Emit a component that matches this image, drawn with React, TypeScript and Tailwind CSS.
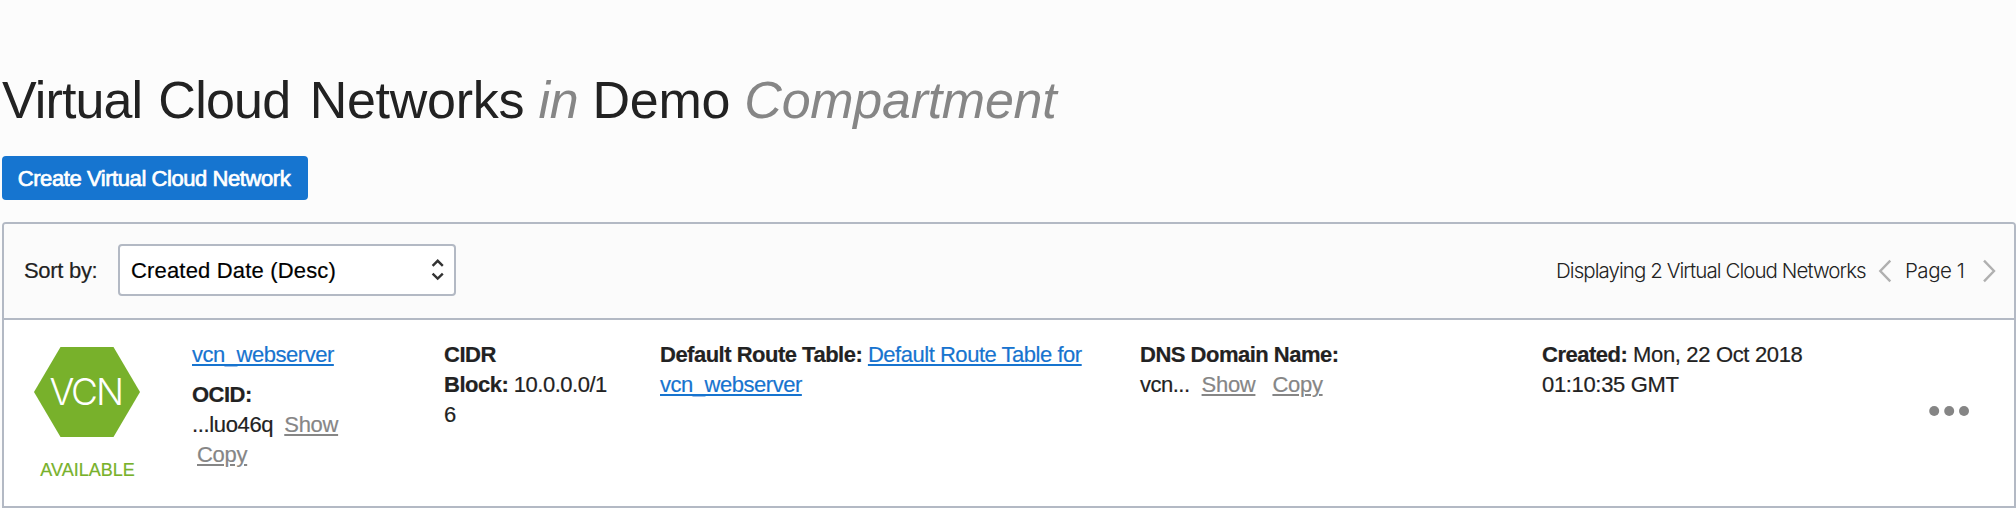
import React from "react";

function Heading() {
  return (
    <h1 className="h-[60px] text-[52px] leading-[60px] tracking-[-0.27px] whitespace-nowrap text-[#222]">
      <span className="mr-[2px] tracking-[-0.9px]">Virtual</span>{" "}
      <span className="mr-[5px] tracking-[-0.75px]">Cloud</span>{" "}
      <span>Networks</span>{" "}
      <em className="text-[#868686]">in</em> <span>Demo</span>{" "}
      <em className="text-[#868686]">Compartment</em>
    </h1>
  );
}

function TextLink({ children }: { children: React.ReactNode }) {
  return (
    <a href="#" className="tracking-[-0.47px] text-[#1774cf] underline decoration-2 underline-offset-[2px] [text-decoration-skip-ink:none]">
      {children}
    </a>
  );
}

function MutedLink({ children }: { children: React.ReactNode }) {
  return (
    <a href="#" className="tracking-[-0.3px] text-[#868686] underline decoration-2 underline-offset-[2px]">
      {children}
    </a>
  );
}

function SortSelect() {
  return (
    <button className="mb-[2px] ml-5 flex h-[52px] w-[338px] items-center justify-between rounded-[4px] border-2 border-[#b3b9c4] bg-white pr-[10px] pl-[11px] text-black">
      <span className="pt-[2px] tracking-[0.17px]">Created Date (Desc)</span>
      <svg width="14" height="24" viewBox="0 0 14 24" fill="none" stroke="#333" strokeWidth="2.4">
        <path d="M2.6 7.8 L7.7 2.8 L12.8 7.8" />
        <path d="M2.6 15.6 L7.7 20.6 L12.8 15.6" />
      </svg>
    </button>
  );
}

function Toolbar() {
  return (
    <div className="flex h-[96px] items-center border-b-2 border-[#b3b9c4] bg-[#fbfbfb] pr-[18px] pl-5">
      <span className="w-[74px] tracking-[-0.3px] whitespace-nowrap">Sort by:</span>
      <SortSelect />
      <div className="ml-auto flex items-center font-['Inter'] text-[20.5px] font-light whitespace-nowrap [-webkit-text-stroke:0px]">
        <span className="w-[312px] tracking-[-0.94px]">Displaying 2 Virtual Cloud Networks</span>
        <svg className="ml-[10px]" width="14" height="26" viewBox="0 0 14 26" fill="none" stroke="#b0b0b0" strokeWidth="2.4">
          <path d="M12.3 2.6 L2.3 13 L12.3 23.4" />
        </svg>
        <span className="ml-[13px] w-[61px] tracking-[-0.5px]">Page 1</span>
        <svg className="ml-[16px]" width="14" height="26" viewBox="0 0 14 26" fill="none" stroke="#b0b0b0" strokeWidth="2.4">
          <path d="M2 2.6 L12 13 L2 23.4" />
        </svg>
      </div>
    </div>
  );
}

function VcnBadge() {
  return (
    <div className="flex w-[188px] shrink-0 flex-col pl-[30px]">
      <svg className="mt-[7px]" width="106" height="90" viewBox="0 0 106 90">
        <polygon points="0,45 26.5,0 79.5,0 106,45 79.5,90 26.5,90" fill="#78b12b" />
        <text x="15.5" y="58" fontFamily="Inter, sans-serif" fontWeight="300" fontSize="37" fill="#fff" textLength="74">
          VCN
        </text>
      </svg>
      <span className="mt-[22px] w-[106px] pl-px text-center text-[18px] leading-[22px] tracking-normal text-[#78b12b]">
        AVAILABLE
      </span>
    </div>
  );
}

function Row() {
  return (
    <div className="flex flex-1 bg-white pt-5">
      <VcnBadge />
      <div className="w-[252px] shrink-0">
        <div><TextLink>vcn_webserver</TextLink></div>
        <div className="mt-[10px]"><b>OCID:</b></div>
        <div>
          <span className="tracking-[-0.35px]">...luo46q</span>
          <span className="ml-[11px]"><MutedLink>Show</MutedLink></span>
        </div>
        <div className="pl-[5px]"><MutedLink>Copy</MutedLink></div>
      </div>
      <div className="w-[216px] shrink-0">
        <b>CIDR<br />Block:</b> 10.0.0.0/1<br />6
      </div>
      <div className="w-[480px] shrink-0 whitespace-nowrap">
        <b>Default Route Table:</b> <TextLink>Default Route Table for</TextLink>
        <br />
        <TextLink>vcn_webserver</TextLink>
      </div>
      <div className="w-[402px] shrink-0">
        <b>DNS Domain Name:</b>
        <div>
          vcn...<span className="ml-[12px]"><MutedLink>Show</MutedLink></span>
          <span className="ml-[17px]"><MutedLink>Copy</MutedLink></span>
        </div>
      </div>
      <div className="w-[387px] shrink-0 tracking-[-0.34px]">
        <b className="tracking-[-0.5px]">Created:</b> Mon, 22 Oct 2018<br />01:10:35 GMT
      </div>
      <button className="mt-[66px] h-[10px]" aria-label="Actions">
        <svg className="block" width="40" height="10" viewBox="0 0 40 10" fill="#858585">
          <circle cx="5.2" cy="5" r="5" />
          <circle cx="20.2" cy="5" r="5" />
          <circle cx="35" cy="5" r="5" />
        </svg>
      </button>
    </div>
  );
}

export default function App() {
  return (
    <div className="h-[508px] w-[2016px] overflow-hidden bg-[#fcfcfc] pt-[70px] pl-[2px] font-['Liberation_Sans',Arial,sans-serif] text-[22px] leading-[30px] tracking-[-0.5px] text-[#222]">
      <Heading />
      <button className="mt-[26px] flex h-[44px] w-[306px] items-center justify-center rounded-[4px] bg-[#1675d0] pt-[2px] pr-[2px] tracking-[-0.43px] whitespace-nowrap text-white [-webkit-text-stroke:0.7px_white]">
        Create Virtual Cloud Network
      </button>
      <div className="mt-[22px] flex h-[286px] w-[2014px] flex-col overflow-hidden rounded-t-[4px] border-2 border-[#b3b9c4] [-webkit-text-stroke:0.2px]">
        <Toolbar />
        <Row />
      </div>
    </div>
  );
}
